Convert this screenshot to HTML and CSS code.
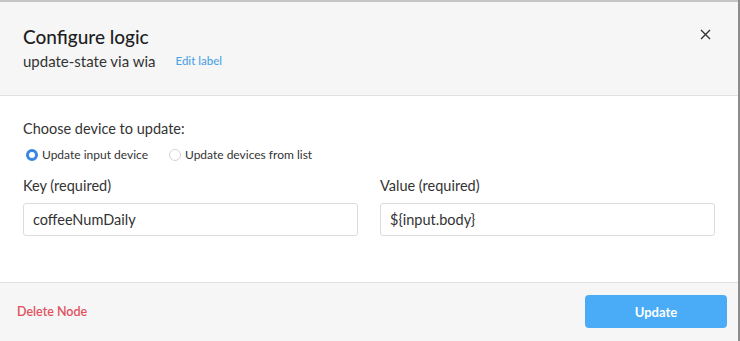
FILE: index.html
```html
<!DOCTYPE html>
<html lang="en">
<head>
  <meta charset="UTF-8">
  <title>Configure logic</title>
  <link rel="stylesheet" href="styles.css">
</head>
<body>
  <div class="modal">
    <header class="modal-header">
      <div class="header-text">
        <h1>Configure logic</h1>
        <div class="subtitle">
          <span>update-state via wia</span>
          <a class="edit-link" href="#">Edit label</a>
        </div>
      </div>
      <button class="close" aria-label="Close">
        <svg width="11" height="11" viewBox="0 0 11 11">
          <path d="M1 1 L10 10 M10 1 L1 10" stroke="#333" stroke-width="1.4" fill="none"/>
        </svg>
      </button>
    </header>

    <div class="modal-body">
      <div class="section-label">Choose device to update:</div>
      <div class="radios">
        <label class="radio"><span class="dot checked"></span>Update input device</label>
        <label class="radio"><span class="dot"></span>Update devices from list</label>
      </div>
      <div class="fields">
        <div class="field">
          <label>Key (required)</label>
          <div class="input">coffeeNumDaily</div>
        </div>
        <div class="field">
          <label>Value (required)</label>
          <div class="input">${input.body}</div>
        </div>
      </div>
    </div>

    <footer class="modal-footer">
      <a class="delete" href="#">Delete Node</a>
      <button class="button">Update</button>
    </footer>
  </div>
</body>
</html>
```

FILE: styles.css
```css
:root {
  --primary: #4aabf7;
  --link: #4da3e6;
  --danger: #e0525e;
  --text: #2a2a2f;
  --panel: #f6f6f6;
  --border: #e2e2e2;
}

body {
  margin: 0;
  font-family: 'Lato', 'Open Sans', sans-serif;
  color: var(--text);
  background: #fff;
}

.modal {
  width: 738px;
  height: 341px;
  border-right: 2px solid #8d8d8d;
  display: flex;
  flex-direction: column;
}

.modal-header {
  background: var(--panel);
  border-top: 2px solid #c6c6c6;
  border-bottom: 1px solid var(--border);
  height: 96px;
  flex-shrink: 0;
  box-sizing: border-box;
  padding: 23px 23px 0 23px;
  display: flex;
  justify-content: space-between;
  align-items: flex-start;
}

.modal-header h1 {
  margin: 0;
  font-size: 19px;
  font-weight: 500;
  line-height: 24px;
  color: #1f1f24;
}

.subtitle {
  margin-top: 2px;
  font-size: 15px;
  line-height: 20px;
  display: flex;
  align-items: center;
  gap: 20px;
  color: #333;
}

.edit-link {
  font-size: 11.5px;
  color: var(--link);
  text-decoration: none;
  font-weight: 500;
}

.close {
  background: none;
  border: none;
  padding: 0;
  margin: 4px 4px 0 0;
  cursor: pointer;
  line-height: 0;
}

.modal-body {
  flex: 1;
  padding: 23px 23px 0 23px;
  box-sizing: border-box;
}

.section-label {
  font-size: 14.5px;
  line-height: 20px;
  color: #333;
}

.radios {
  display: flex;
  gap: 18px;
  margin-top: 6px;
  font-size: 12px;
  line-height: 20px;
  color: #333;
}

.radio {
  display: flex;
  align-items: center;
  gap: 4px;
}

.dot {
  width: 10px;
  height: 10px;
  border-radius: 50%;
  border: 1px solid #d4d4d4;
  margin-left: 3px;
  box-sizing: content-box;
}

.dot.checked {
  border: 3px solid #3a86e0;
  width: 6px;
  height: 6px;
  background: #fff;
}

.fields {
  display: flex;
  gap: 22px;
  margin-top: 11px;
}

.field {
  flex: 1;
  display: flex;
  flex-direction: column;
}

.field label {
  font-size: 14.5px;
  line-height: 20px;
  color: #333;
}

.input {
  margin-top: 7px;
  height: 33px;
  box-sizing: border-box;
  border: 1px solid #dcdcdc;
  border-radius: 3px;
  padding: 0 9px;
  font-size: 14.5px;
  line-height: 31px;
  color: #333;
}

.modal-footer {
  background: var(--panel);
  border-top: 1px solid var(--border);
  height: 59px;
  flex-shrink: 0;
  box-sizing: border-box;
  padding: 12px 11px 0 17px;
  display: flex;
  justify-content: space-between;
  align-items: flex-start;
}

.delete {
  color: var(--danger);
  font-size: 12.5px;
  font-weight: 600;
  text-decoration: none;
  line-height: 33px;
}

.button {
  width: 142px;
  height: 33px;
  background: var(--primary);
  color: #fff;
  border: none;
  border-radius: 4px;
  font-family: inherit;
  font-size: 13px;
  font-weight: 700;
  cursor: pointer;
}
```
